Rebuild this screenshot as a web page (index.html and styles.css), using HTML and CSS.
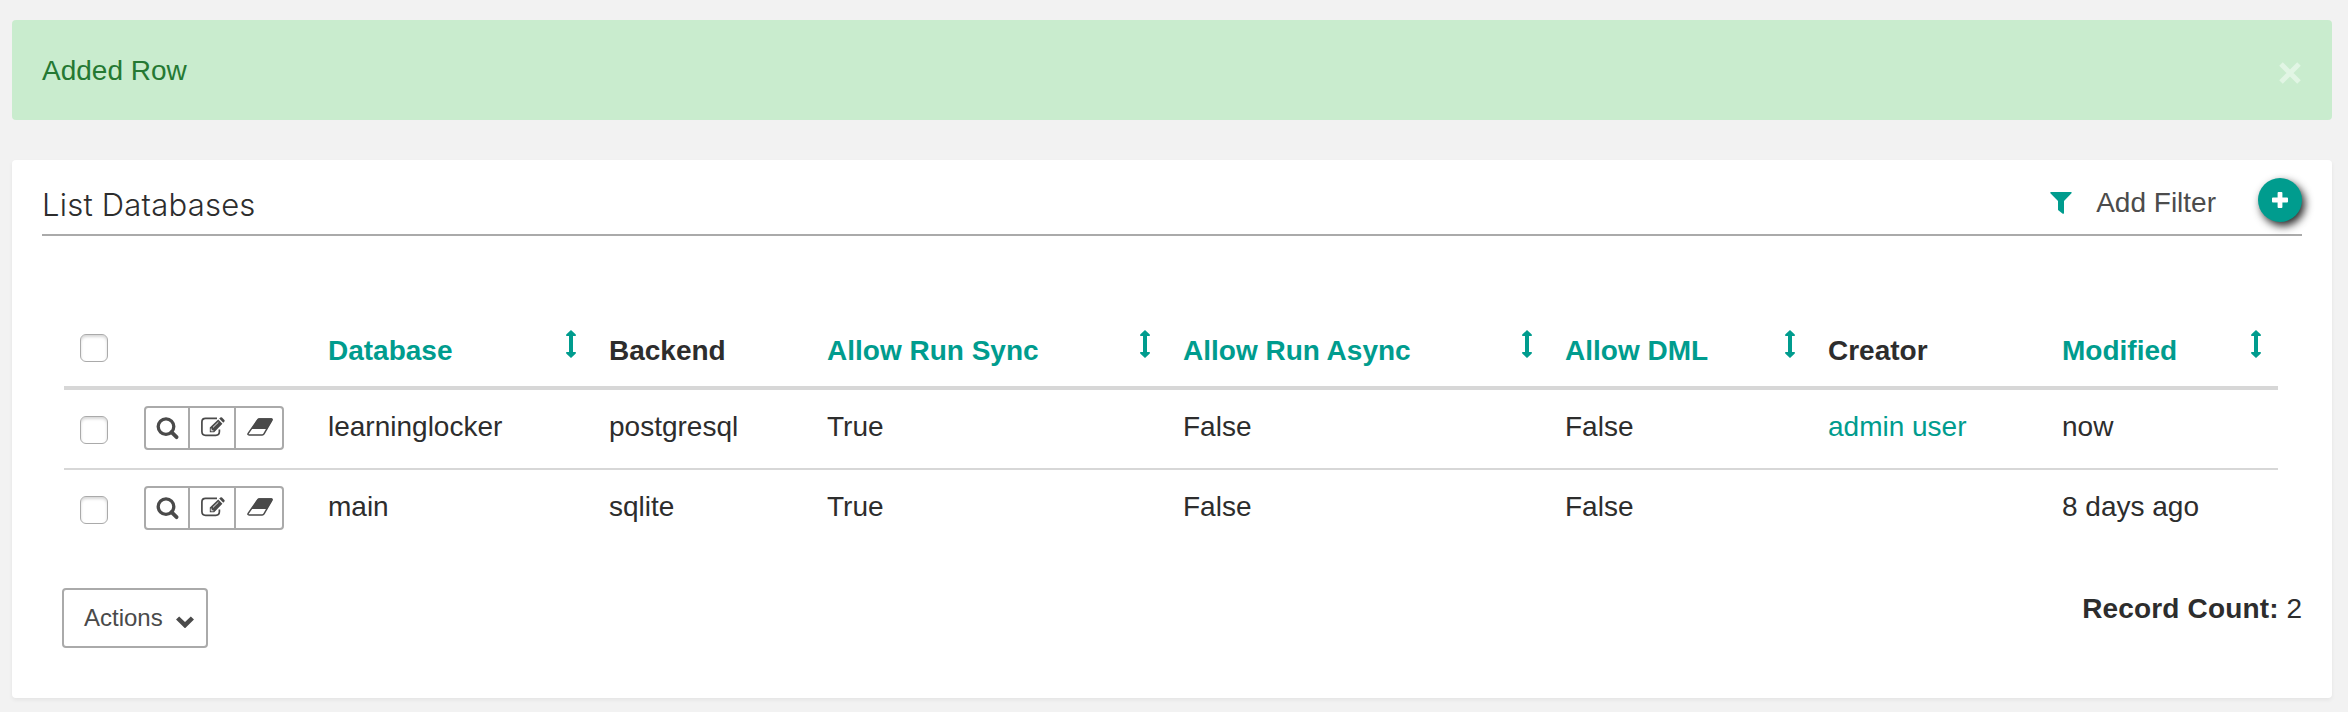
FILE: index.html
```html
<!DOCTYPE html>
<html lang="en">
<head>
<meta charset="utf-8">
<title>List Databases</title>
<link rel="stylesheet" href="styles.css">
</head>
<body>
<svg class="sprite" aria-hidden="true">
  <symbol id="i-search" viewBox="0 0 24 24"><circle cx="10" cy="9.6" r="7.8" fill="none" stroke="currentColor" stroke-width="3.3"/><path d="M15.5 15.1L20.6 20.2" stroke="currentColor" stroke-width="3.8" stroke-linecap="round"/></symbol>
  <symbol id="i-edit" viewBox="0 0 24 20"><path d="M16 1.4H4.6Q.9 1.4 .9 5V14.6Q.9 18.3 4.6 18.3H14.8Q18.4 18.3 18.4 14.6V12.5" fill="none" stroke="currentColor" stroke-width="1.7"/><path fill="currentColor" d="M8.8 15.2V10.6L17.2 2.5L21.4 6.8L13.2 15.2ZM18.2 1.6L19.4 .5Q20.2 -.1 21 .6L23.4 3Q24 3.8 23.4 4.6L22.3 5.8Z"/><path d="M10.2 11.6V13.8H12.4M12 10.4L17.4 5.2" fill="none" stroke="#fff" stroke-width=".9"/></symbol>
  <symbol id="i-eraser" viewBox="0 0 26 18"><path d="M12.4 1H24Q25.6 1 24.7 2.5L17 15.9Q16.4 16.9 15.2 16.9H2.1Q.3 16.9 1.2 15.3L10.6 2Q11.2 1 12.4 1Z" fill="none" stroke="currentColor" stroke-width="1.5"/><path d="M12.4 .3H24.4Q26.3 .6 25.3 2.5L19.9 11H4.2L10.6 1.3Q11.2 .4 12.4 .3Z" fill="currentColor"/></symbol>
  <symbol id="i-sort" viewBox="0 0 10 28"><path fill="currentColor" d="M5 0L9.8 4.6V6H7V22H9.8V23.4L5 28L.2 23.4V22H3V6H.2V4.6Z"/></symbol>
</svg>

<div class="alert">
  <span>Added Row</span>
  <svg class="alert-close" viewBox="0 0 22 22"><path d="M2 2L20 20M20 2L2 20" stroke="currentColor" stroke-width="5"/></svg>
</div>

<main class="panel">
  <header class="panel-head">
    <h1 class="title">List Databases</h1>
    <a class="filter">
      <svg class="filter-icon" viewBox="0 0 22 22"><path fill="currentColor" d="M.9 0H21.1Q22 .2 21.5 1.2L14 9V21.2Q13.6 22.3 12.4 21.6L8.3 18.2Q8 17.9 8 17.4V9L.4 1.2Q0 .2 .9 0Z"/></svg>
      Add Filter
    </a>
    <a class="add"><svg class="add-icon" viewBox="0 0 16 16"><path fill="currentColor" d="M6.5 0H9.5Q10.4 0 10.4 .9V5.6H15.1Q16 5.6 16 6.5V9.5Q16 10.4 15.1 10.4H10.4V15.1Q10.4 16 9.5 16H6.5Q5.6 16 5.6 15.1V10.4H.9Q0 10.4 0 9.5V6.5Q0 5.6 .9 5.6H5.6V.9Q5.6 0 6.5 0Z"/></svg></a>
  </header>

  <table class="list">
    <colgroup>
      <col class="c-check"><col class="c-tools"><col class="c-database"><col class="c-backend"><col class="c-sync"><col class="c-async"><col class="c-dml"><col class="c-creator"><col class="c-modified">
    </colgroup>
    <thead>
      <tr>
        <th><span class="box"></span></th>
        <th></th>
        <th><a class="sort">Database <svg class="sort-icon"><use href="#i-sort"/></svg></a></th>
        <th>Backend</th>
        <th><a class="sort">Allow Run Sync <svg class="sort-icon"><use href="#i-sort"/></svg></a></th>
        <th><a class="sort">Allow Run Async <svg class="sort-icon"><use href="#i-sort"/></svg></a></th>
        <th><a class="sort">Allow DML <svg class="sort-icon"><use href="#i-sort"/></svg></a></th>
        <th>Creator</th>
        <th><a class="sort">Modified <svg class="sort-icon"><use href="#i-sort"/></svg></a></th>
      </tr>
    </thead>
    <tbody>
      <tr>
        <td><span class="box"></span></td>
        <td><div class="tools"><a class="tool show"><svg><use href="#i-search"/></svg></a><a class="tool edit"><svg><use href="#i-edit"/></svg></a><a class="tool erase"><svg><use href="#i-eraser"/></svg></a></div></td>
        <td>learninglocker</td><td>postgresql</td><td>True</td><td>False</td><td>False</td><td><a class="link">admin user</a></td><td>now</td>
      </tr>
      <tr>
        <td><span class="box"></span></td>
        <td><div class="tools"><a class="tool show"><svg><use href="#i-search"/></svg></a><a class="tool edit"><svg><use href="#i-edit"/></svg></a><a class="tool erase"><svg><use href="#i-eraser"/></svg></a></div></td>
        <td>main</td><td>sqlite</td><td>True</td><td>False</td><td>False</td><td></td><td>8 days ago</td>
      </tr>
    </tbody>
  </table>

  <footer class="panel-foot">
    <button class="actions">Actions <svg class="chevron" viewBox="0 0 18 12"><path d="M1.6 2L9 9.2L16.4 2" fill="none" stroke="currentColor" stroke-width="4.5"/></svg></button>
    <div class="count"><strong>Record Count:</strong> 2</div>
  </footer>
</main>
</body>
</html>
```
FILE: styles.css
```css
* { box-sizing: border-box; }

body {
  margin: 0;
  padding: 20px 16px 0 12px;
  height: 712px;
  overflow: hidden;
  background: #f2f2f2;
  color: #2d2d2d;
  font: 28px/42px "Liberation Sans", Arial, sans-serif;
}

svg { display: block; }
.sprite { display: none; }

.alert {
  display: flex;
  justify-content: space-between;
  align-items: flex-start;
  height: 100px;
  padding: 30px 31px 0 30px;
  border-radius: 4px;
  background: #c9ecce;
  color: #257933;
}
.alert-close { width: 22px; height: 22px; margin-top: 12px; color: #e1f5e4; }

.panel {
  height: 538px;
  margin-top: 40px;
  padding: 0 30px;
  border-radius: 4px;
  background: #fff;
  box-shadow: 0 2px 4px rgba(0, 0, 0, .06);
}

.panel-head {
  display: flex;
  align-items: flex-start;
  height: 76px;
  border-bottom: 2px solid #aaa;
}
.title {
  flex: 1;
  margin: 25px 0 0;
  font: 300 31px/40px Inter, "Liberation Sans", sans-serif;
  letter-spacing: .22px;
}
.filter {
  display: flex;
  gap: 24px;
  margin: 22px 42px 0 0;
  color: #4c4c4c;
}
.filter-icon { width: 22px; height: 22px; margin-top: 10px; color: #009c8e; }
.add {
  display: flex;
  align-items: center;
  justify-content: center;
  width: 44px;
  height: 44px;
  margin-top: 18px;
  border-radius: 50%;
  background: #009c8e;
  color: #fff;
  box-shadow: 3px 4px 8px rgba(0, 0, 0, .85);
}
.add-icon { width: 16px; height: 16px; }

.list {
  width: 2214px;
  margin: 74px 0 0 22px;
  table-layout: fixed;
  border-collapse: separate;
  border-spacing: 0;
}
.c-check { width: 64px; }
.c-tools { width: 184px; }
.c-database { width: 281px; }
.c-backend { width: 218px; }
.c-sync { width: 356px; }
.c-async { width: 382px; }
.c-dml { width: 263px; }
.c-creator { width: 234px; }
.c-modified { width: 232px; }

th, td {
  height: 80px;
  padding: 16px 16px 0;
  text-align: left;
  vertical-align: top;
  white-space: nowrap;
}
th { padding-top: 20px; border-bottom: 4px solid #d7d7d7; }
td { border-bottom: 2px solid #d7d7d7; }
tbody tr:last-child td { border-bottom-color: transparent; }

.sort { display: flex; justify-content: space-between; color: #009c8e; }
.sort-icon { width: 10px; height: 28px; margin-right: 1px; }
.link { color: #009c8e; }

.box {
  display: block;
  width: 28px;
  height: 28px;
  margin-top: 10px;
  border: 1px solid #aaa;
  border-radius: 6px;
  background: #fff;
  box-shadow: inset 0 2px 3px rgba(0, 0, 0, .16);
}
th .box { margin-top: 4px; }

.tools {
  display: flex;
  width: 140px;
  height: 44px;
  border: 2px solid #aaa;
  border-radius: 4px;
  color: #4a4a4a;
}
.tool { padding: 9px 0 0 10px; }
.tool + .tool { border-left: 2px solid #aaa; }
.show { width: 42px; }
.show svg { width: 24px; height: 24px; }
.edit { width: 46px; padding-left: 11px; }
.edit svg { width: 24px; height: 20px; }
.erase { width: 48px; padding-left: 11px; }
.erase svg { width: 26px; height: 18px; margin-top: 1px; }

.panel-foot {
  display: flex;
  justify-content: space-between;
  align-items: flex-start;
  margin-top: 38px;
  padding-left: 20px;
}
.actions {
  display: flex;
  gap: 13px;
  width: 146px;
  height: 60px;
  padding: 7px 0 0 20px;
  border: 2px solid #aaa;
  border-radius: 4px;
  background: #fff;
  color: #4a4a4a;
  font: 24px/42px "Liberation Sans", Arial, sans-serif;
}
.chevron { width: 18px; height: 12px; margin-top: 19px; }
.count strong { letter-spacing: .15px; }
```
